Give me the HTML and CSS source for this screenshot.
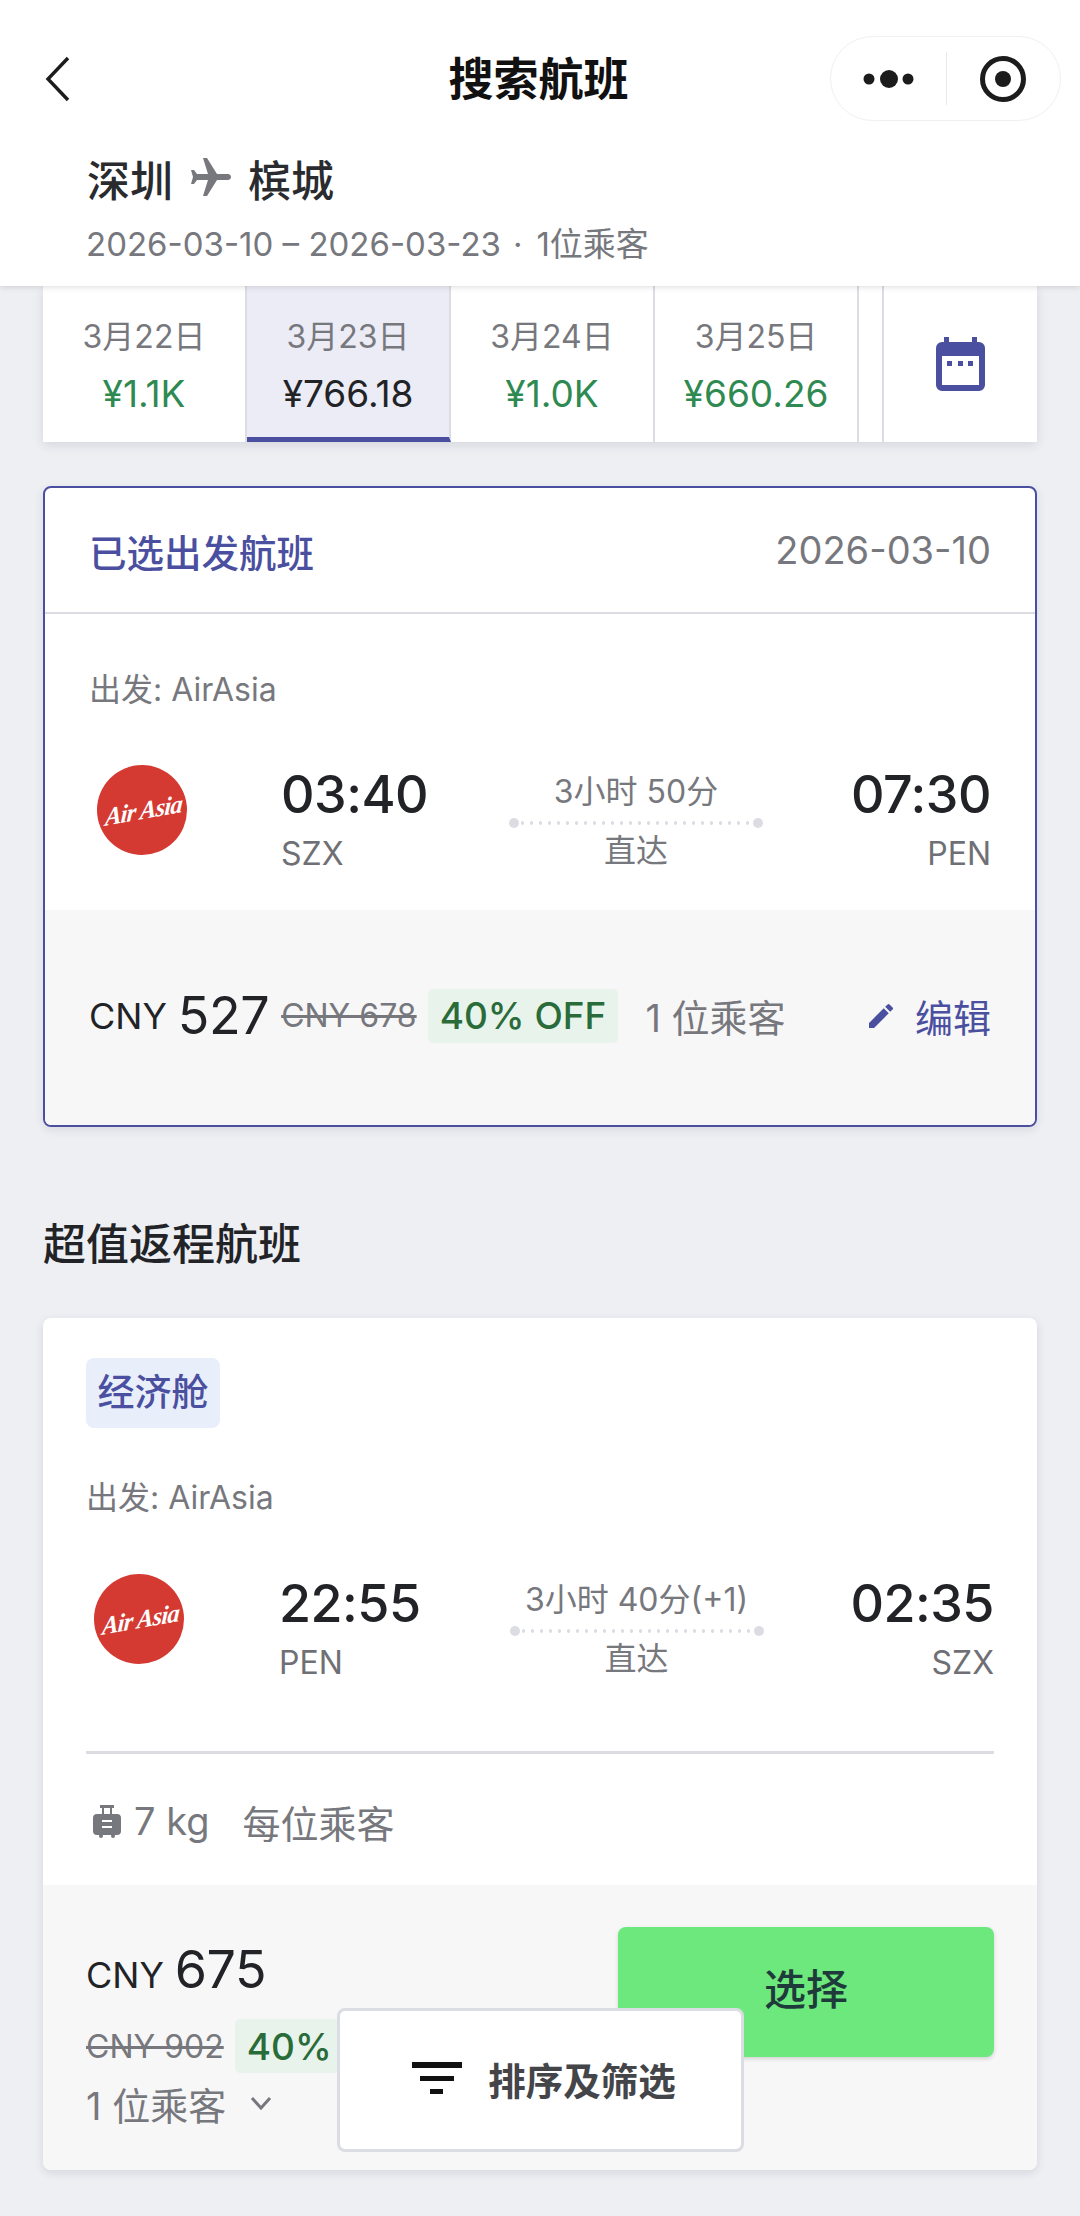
FILE: index.html
```html
<!DOCTYPE html>
<html lang="zh-CN">
<head>
    <meta charset="UTF-8">
    <meta name="viewport" content="width=device-width, initial-scale=1.0">
    <title>搜索航班</title>
    <link rel="stylesheet" href="styles.css">
</head>
<body>

    <div class="page">
        <!-- Top bar and route summary -->
        <header class="top">
            <div class="nav">
                <svg class="nav-back" width="26" height="46" viewBox="0 0 26 46">
                    <polyline points="23,2 3,23 23,44" fill="none" stroke="#1c1c1c" stroke-width="3.4"/>
                </svg>
                <h1 class="nav-title">搜索航班</h1>
                <div class="capsule">
                    <svg class="capsule-dots" width="52" height="20" viewBox="0 0 52 20">
                        <circle cx="6" cy="10" r="5.5" fill="#1c1c1c"/>
                        <circle cx="26" cy="10" r="9" fill="#1c1c1c"/>
                        <circle cx="45" cy="10" r="5.5" fill="#1c1c1c"/>
                    </svg>
                    <span class="capsule-line"></span>
                    <svg class="capsule-ring" width="46" height="46" viewBox="0 0 46 46">
                        <circle cx="23" cy="23" r="20.5" fill="none" stroke="#1c1c1c" stroke-width="5"/>
                        <circle cx="23" cy="23" r="8" fill="#1c1c1c"/>
                    </svg>
                </div>
            </div>
            <div class="route">
                <span>深圳</span>
                <svg class="route-plane" width="48" height="48" viewBox="0 0 24 24">
                    <path transform="rotate(90 12 12)" d="M21 16v-2l-8-5V3.5c0-.83-.67-1.5-1.5-1.5S10 2.67 10 3.5V9l-8 5v2l8-2.5V19l-2 1.5V22l3.5-1 3.5 1v-1.5L13 19v-5.5l8 2.5z" fill="#77787d"/>
                </svg>
                <span>槟城</span>
            </div>
            <div class="route-sub">2026-03-10 – 2026-03-23<span class="route-dot">·</span>1位乘客</div>
        </header>

        <!-- Date strip -->
        <div class="dates">
            <div class="date-tab">
                <div class="date-day">3月22日</div>
                <div class="date-price">¥1.1K</div>
            </div>
            <div class="date-tab selected">
                <div class="date-day">3月23日</div>
                <div class="date-price">¥766.18</div>
            </div>
            <div class="date-tab">
                <div class="date-day">3月24日</div>
                <div class="date-price">¥1.0K</div>
            </div>
            <div class="date-tab">
                <div class="date-day">3月25日</div>
                <div class="date-price">¥660.26</div>
            </div>
            <div class="date-sliver"></div>
            <div class="date-calendar">
                <svg width="49" height="54" viewBox="0 0 49 54">
                    <path fill-rule="evenodd" d="M8 0h5v5h23V0h5v5h2a6 6 0 0 1 6 6v37a6 6 0 0 1-6 6H6a6 6 0 0 1-6-6V11a6 6 0 0 1 6-6h2zM6 19v29h37V19z" fill="#4b4f9f"/>
                    <rect x="11" y="24" width="5" height="5" fill="#4b4f9f"/>
                    <rect x="22" y="24" width="5" height="5" fill="#4b4f9f"/>
                    <rect x="32" y="24" width="5" height="5" fill="#4b4f9f"/>
                </svg>
            </div>
        </div>

        <!-- Selected outbound flight -->
        <section class="card card-selected">
            <div class="selected-head">
                <span class="selected-title">已选出发航班</span>
                <span class="selected-date">2026-03-10</span>
            </div>
            <div class="selected-body">
                <div class="carrier">出发: AirAsia</div>
                <div class="flight">
                    <svg class="logo" width="90" height="90" viewBox="0 0 90 90">
                        <circle cx="45" cy="45" r="45" fill="#d43a32"/>
                        <text x="58" y="54" transform="rotate(-10 45 45) skewX(-14)" text-anchor="middle" class="logo-text">Air Asia</text>
                    </svg>
                    <div class="stop">
                        <div class="stop-time">03:40</div>
                        <div class="stop-code">SZX</div>
                    </div>
                    <div class="leg">
                        <div class="leg-text">3小时 50分</div>
                        <div class="leg-line"></div>
                        <div class="leg-text leg-direct">直达</div>
                    </div>
                    <div class="stop stop-end">
                        <div class="stop-time">07:30</div>
                        <div class="stop-code">PEN</div>
                    </div>
                </div>
            </div>
            <div class="selected-foot">
                <span class="cny">CNY</span>
                <span class="amount">527</span>
                <span class="old-price">CNY 678</span>
                <span class="off">40% OFF</span>
                <span class="pax">1 位乘客</span>
                <span class="edit">
                    <svg width="32" height="32" viewBox="0 0 24 24">
                        <path d="M3 17.25V21h3.75L17.81 9.94l-3.75-3.75L3 17.25zM20.71 7.04a1 1 0 0 0 0-1.41l-2.34-2.34a1 1 0 0 0-1.41 0l-1.83 1.83 3.75 3.75 1.83-1.83z" fill="#4b4f9f"/>
                    </svg>
                    编辑
                </span>
            </div>
        </section>

        <h2 class="section-title">超值返程航班</h2>

        <!-- Return flight offer -->
        <section class="card card-offer">
            <div class="offer-body">
                <span class="cabin">经济舱</span>
                <div class="carrier">出发: AirAsia</div>
                <div class="flight">
                    <svg class="logo" width="90" height="90" viewBox="0 0 90 90">
                        <circle cx="45" cy="45" r="45" fill="#d43a32"/>
                        <text x="58" y="54" transform="rotate(-10 45 45) skewX(-14)" text-anchor="middle" class="logo-text">Air Asia</text>
                    </svg>
                    <div class="stop">
                        <div class="stop-time">22:55</div>
                        <div class="stop-code">PEN</div>
                    </div>
                    <div class="leg">
                        <div class="leg-text">3小时 40分(+1)</div>
                        <div class="leg-line"></div>
                        <div class="leg-text leg-direct">直达</div>
                    </div>
                    <div class="stop stop-end">
                        <div class="stop-time">02:35</div>
                        <div class="stop-code">SZX</div>
                    </div>
                </div>
                <div class="offer-line"></div>
                <div class="bag">
                    <svg width="28" height="33" viewBox="0 0 28 33">
                        <path fill-rule="evenodd" d="M7 0h14v3h-2v6h5a4 4 0 0 1 4 4v13a4 4 0 0 1-4 4H4a4 4 0 0 1-4-4V13a4 4 0 0 1 4-4h5V3H7zM11 3v6h6V3zM9 15v2h10v-2zM9 21v2h10v-2z" fill="#77787d"/>
                        <circle cx="8" cy="31" r="2" fill="#77787d"/>
                        <circle cx="20" cy="31" r="2" fill="#77787d"/>
                    </svg>
                    <span class="bag-weight">7 kg</span>
                    <span>每位乘客</span>
                </div>
            </div>
            <div class="offer-foot">
                <div class="offer-price">
                    <div class="offer-total">
                        <span class="cny">CNY</span>
                        <span class="amount">675</span>
                    </div>
                    <div class="offer-was">
                        <span class="old-price">CNY 902</span>
                        <span class="off">40% OFF</span>
                    </div>
                    <div class="offer-pax">
                        1 位乘客
                        <svg width="22" height="14" viewBox="0 0 22 14">
                            <polyline points="2,2 11,12 20,2" fill="none" stroke="#77787d" stroke-width="3"/>
                        </svg>
                    </div>
                </div>
                <button class="choose">选择</button>
            </div>
        </section>

        <!-- Floating sort button -->
        <button class="sort">
            <svg width="50" height="32" viewBox="0 0 50 32">
                <rect x="0" y="0" width="50" height="6" fill="#111"/>
                <rect x="8" y="14" width="34" height="5" fill="#111"/>
                <rect x="18" y="27" width="13" height="5" fill="#111"/>
            </svg>
            排序及筛选
        </button>
    </div>

</body>
</html>
```

FILE: styles.css
```css
* {
    box-sizing: border-box;
}
body {
    margin: 0;
    font-family: 'Inter', 'Noto Sans CJK SC', sans-serif;
    color: #222327;
}
.page {
    position: relative;
    width: 1080px;
    height: 2216px;
    overflow: hidden;
    background: #edeff3;
}

/* Top bar */
.top {
    position: relative;
    z-index: 2;
    height: 286px;
    background: #fff;
    box-shadow: 0 1px 6px rgba(0, 0, 0, 0.14);
}
.nav {
    position: relative;
    height: 146px;
    padding-top: 36px;
    display: flex;
    justify-content: flex-end;
    padding-right: 19px;
}
.nav-back {
    position: absolute;
    left: 45px;
    top: 56px;
}
.nav-title {
    position: absolute;
    left: 0;
    right: 0;
    top: 52px;
    margin: 0 0 0 -3px;
    text-align: center;
    font-size: 45px;
    line-height: 56px;
    font-weight: 700;
    color: #111;
}
.capsule {
    width: 231px;
    height: 85px;
    display: flex;
    align-items: center;
    border: 1px solid #f0f0f0;
    border-radius: 43px;
    padding-left: 32px;
}
.capsule-line {
    width: 1px;
    height: 53px;
    margin: 0 33px 0 31px;
    background: #e8e8e8;
}
.route {
    display: flex;
    align-items: center;
    padding-left: 87px;
    height: 56px;
    margin-top: 4px;
    font-size: 43px;
    font-weight: 500;
    color: #2a2b2f;
}
.route-plane {
    margin: 0 13px 0 14px;
}
.route-sub {
    padding-left: 86px;
    margin-top: 16px;
    font-size: 33px;
    line-height: 44px;
    color: #77787d;
    white-space: nowrap;
}
.route-dot {
    margin: 0 14px 0 12px;
}

/* Date strip */
.dates {
    display: flex;
    height: 156px;
    margin: 0 43px;
    background: #fff;
    box-shadow: 0 3px 10px rgba(40, 44, 70, 0.12);
}
.date-tab {
    width: 204px;
    padding-top: 30px;
    text-align: center;
    border-right: 2px solid #dcdde3;
}
.date-day {
    font-size: 32px;
    line-height: 42px;
    color: #77787d;
}
.date-price {
    margin-top: 15px;
    font-size: 37px;
    line-height: 42px;
    color: #2f8a52;
}
.date-tab.selected {
    background: #ebecf5;
    border-bottom: 5px solid #4b4f9f;
}
.date-tab.selected .date-price {
    color: #222327;
}
.date-sliver {
    width: 25px;
    border-right: 2px solid #dcdde3;
}
.date-calendar {
    flex: 1;
    display: flex;
    justify-content: center;
    align-items: flex-start;
    padding-top: 51px;
}

/* Cards */
.card {
    margin: 0 43px;
    background: #fff;
    border-radius: 8px;
    overflow: hidden;
}
.card-selected {
    margin-top: 44px;
    height: 641px;
    border: 2px solid #4b4f9f;
    box-shadow: 0 3px 10px rgba(40, 44, 70, 0.1);
}
.selected-head {
    height: 126px;
    padding: 0 44px 0 44px;
    display: flex;
    justify-content: space-between;
    align-items: center;
    border-bottom: 2px solid #dcdde3;
}
.selected-title {
    font-size: 37.5px;
    font-weight: 500;
    color: #4b4f9f;
}
.selected-date {
    font-size: 38px;
    color: #77787d;
}
.selected-body {
    height: 296px;
    padding: 56px 44px 0 44px;
}
.carrier {
    font-size: 32px;
    line-height: 40px;
    color: #77787d;
}
.flight {
    display: grid;
    grid-template-columns: 192px 1fr 254px 1fr;
    margin-top: 52px;
}
.logo {
    margin: 3px 0 0 8px;
}
.logo-text {
    font-family: 'Liberation Serif', serif;
    font-style: italic;
    font-weight: 700;
    font-size: 25px;
    letter-spacing: -0.8px;
    fill: #fff;
}
.stop-time {
    margin-top: 1px;
    font-size: 52px;
    line-height: 64px;
    font-weight: 500;
    letter-spacing: -0.5px;
}
.stop-code {
    margin-top: 7px;
    font-size: 32px;
    line-height: 40px;
    color: #6f7075;
}
.stop-end {
    text-align: right;
}
.leg {
    padding-top: 10px;
    text-align: center;
}
.card-offer .leg {
    padding-top: 9px;
}
.leg-text {
    font-size: 32px;
    line-height: 40px;
    color: #77787d;
    white-space: nowrap;
}
.leg-direct {
    margin-top: 3px;
}
.leg-line {
    position: relative;
    height: 10px;
    margin-top: 6px;
    background: radial-gradient(circle, #dcdde3 1.5px, transparent 2px) repeat-x left center / 9px 4px;
}
.leg-line::before,
.leg-line::after {
    content: '';
    position: absolute;
    top: 0;
    width: 10px;
    height: 10px;
    border-radius: 50%;
    background: #dcdde3;
}
.leg-line::before {
    left: 0;
}
.leg-line::after {
    right: 0;
}
.selected-foot {
    height: 215px;
    padding: 0 44px 4px 44px;
    display: flex;
    align-items: center;
    background: #f7f7f8;
}
.cny {
    font-size: 36px;
}
.amount {
    font-size: 52px;
    margin-left: 11px;
    letter-spacing: -0.5px;
}
.old-price {
    font-size: 32px;
    color: #77787d;
    text-decoration: line-through;
}
.selected-foot .old-price {
    margin-left: 12px;
}
.off {
    height: 54px;
    padding: 0 12px;
    display: inline-flex;
    align-items: center;
    margin-left: 11px;
    font-size: 37px;
    font-weight: 500;
    color: #2a6b3a;
    background: #e8f3ec;
    border-radius: 5px;
    white-space: nowrap;
}
.pax {
    margin-left: 27px;
    font-size: 38px;
    color: #77787d;
}
.edit {
    margin-left: auto;
    display: flex;
    align-items: center;
    gap: 18px;
    font-size: 38px;
    color: #4b4f9f;
}
.section-title {
    margin: 87px 43px 44px;
    font-size: 43px;
    line-height: 60px;
    font-weight: 500;
}
.card-offer {
    height: 852px;
    box-shadow: 0 3px 10px rgba(40, 44, 70, 0.12);
}
.offer-body {
    height: 567px;
    padding: 40px 43px 0 45px;
}
.cabin {
    display: inline-block;
    width: 134px;
    height: 70px;
    margin-left: -2px;
    text-align: center;
    font-size: 37px;
    line-height: 70px;
    font-weight: 500;
    color: #4b4f9f;
    background: #e9effa;
    border-radius: 8px;
    vertical-align: top;
}
.card-offer .carrier {
    margin-top: 50px;
    margin-left: -2px;
}
.card-offer .flight {
    margin-top: 53px;
    margin-left: -1px;
}
.card-offer .logo {
    margin-left: 7px;
}
.offer-line {
    height: 3px;
    margin: 68px 0 0 -2px;
    background: #dcdde3;
}
.bag {
    display: flex;
    align-items: center;
    margin-top: 42px;
    height: 50px;
    font-size: 38px;
    color: #77787d;
}
.bag svg {
    margin: 0 13px 0 5px;
}
.bag-weight {
    margin-right: 33px;
}
.offer-foot {
    height: 285px;
    padding: 42px 43px 0 43px;
    display: flex;
    justify-content: space-between;
    align-items: flex-start;
    background: #f7f7f8;
}
.offer-price {
    width: 300px;
}
.offer-total {
    height: 82px;
    display: flex;
    align-items: baseline;
    padding-top: 11px;
}
.offer-was {
    display: flex;
    align-items: center;
    margin-top: 10px;
    white-space: nowrap;
}
.offer-pax {
    display: flex;
    align-items: center;
    gap: 24px;
    height: 60px;
    font-size: 38px;
    color: #77787d;
    white-space: nowrap;
}
.choose {
    width: 376px;
    height: 130px;
    padding-bottom: 12px;
    border: none;
    border-radius: 8px;
    font-family: inherit;
    font-size: 42px;
    font-weight: 500;
    color: #1f3a3a;
    background: #6ce87c;
    box-shadow: 0 2px 4px rgba(0, 0, 0, 0.15);
}
.sort {
    position: absolute;
    left: 337px;
    top: 2008px;
    width: 407px;
    height: 144px;
    padding: 0 0 4px 7px;
    display: flex;
    align-items: center;
    justify-content: center;
    gap: 26px;
    border: 3px solid #dcdde3;
    border-radius: 8px;
    background: #fff;
    font-family: inherit;
    font-size: 37.5px;
    font-weight: 700;
    color: #444549;
}
```
